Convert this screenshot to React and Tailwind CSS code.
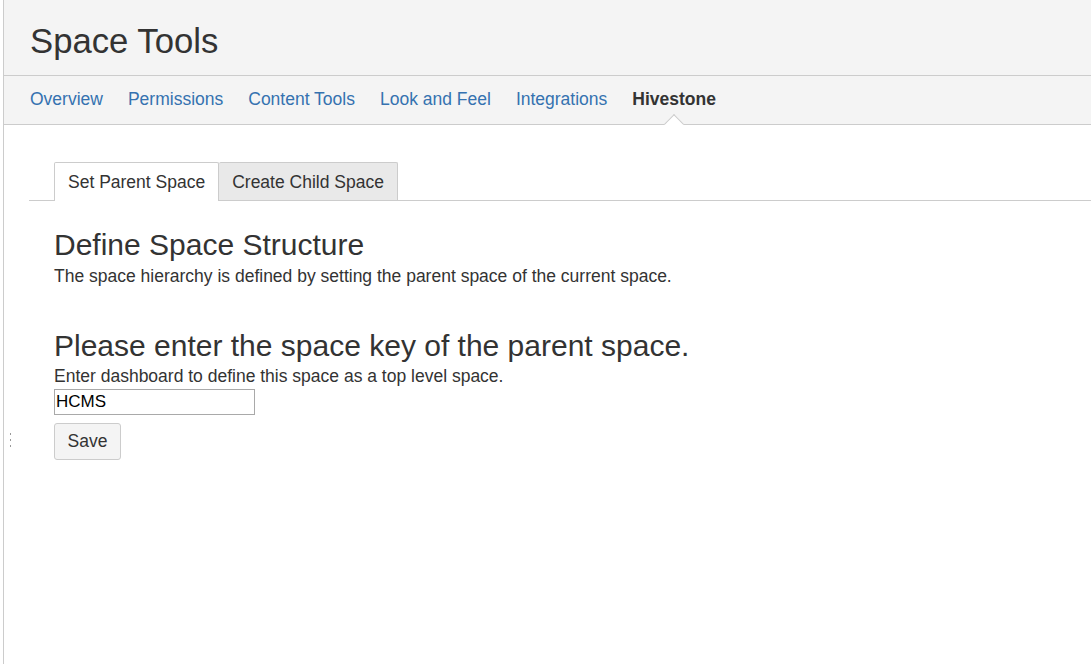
import React from "react";

const navItems = ["Overview", "Permissions", "Content Tools", "Look and Feel", "Integrations"];

const App = () => {
  return (
    <div
      className="relative min-h-[664px] bg-white pl-[3px] text-[#333]"
      style={{ fontFamily: '"Liberation Sans", Arial, sans-serif' }}>
      <div className="min-h-[664px] border-l border-[#cccccc]">
        {/* page header */}
        <div className="h-[76px] bg-[#f4f4f4] border-b border-[#cccccc] pl-[26px] pt-[21px]">
          <h1 className="text-[34.7px] leading-[40px] text-[#333]">Space Tools</h1>
        </div>

        {/* space tools nav */}
        <div className="h-[49px] bg-[#f4f4f4] border-b border-[#cccccc] pl-[26px] flex gap-[25px]">
          {navItems.map((item) => (
            <a key={item} href="#" className="flex items-center h-full pb-[1px] text-[17.5px] text-[#3572b0]">
              {item}
            </a>
          ))}
          <span className="relative flex items-center h-full pb-[1px] text-[17.5px] font-bold text-[#333]">
            Hivestone
            <span className="absolute left-1/2 bottom-[-7px] w-[14px] h-[14px] -translate-x-1/2 rotate-45 bg-white border-t border-l border-[#cccccc]" />
          </span>
        </div>

        <div className="pl-[25px] pt-[37px]">
          {/* tabs */}
          <div className="flex border-b border-[#cccccc] pl-[25px]">
            <div className="-mb-px h-[39px] px-[13px] flex items-center bg-white border border-b-0 border-[#cccccc] rounded-t-[2px] text-[17.5px]">
              Set Parent Space
            </div>
            <div className="h-[38px] px-[13px] pt-[1px] flex items-center bg-[#e9e9e9] border border-b-0 border-l-0 border-[#cccccc] rounded-t-[2px] text-[17.5px]">
              Create Child Space
            </div>
          </div>

          <div className="pl-[25px]">
            <h2 className="mt-[27px] text-[30px] leading-[34px]">Define Space Structure</h2>
            <p className="mt-[4px] text-[17.5px] leading-[20px]">
              The space hierarchy is defined by setting the parent space of the current space.
            </p>

            <h2 className="mt-[43px] text-[30px] leading-[34px]">Please enter the space key of the parent space.</h2>
            <p className="mt-[3px] text-[17.5px] leading-[20px]">
              Enter dashboard to define this space as a top level space.
            </p>
            <input
              type="text"
              defaultValue="HCMS"
              className="mt-[3px] block w-[201px] h-[26px] px-[1px] border border-[#a9a9a9] text-[17px] text-black outline-none"
            />
            <button className="mt-[8px] block w-[67px] h-[37px] bg-[#f4f4f4] border border-[#cccccc] rounded-[3px] text-[17.5px] text-[#333]">
              Save
            </button>
          </div>
        </div>
      </div>

      {/* resize handle dots */}
      <div className="absolute left-[10px] top-[433px] flex flex-col gap-[4px]">
        <span className="block w-[1px] h-[2px] bg-[#999]" />
        <span className="block w-[1px] h-[2px] bg-[#999]" />
        <span className="block w-[1px] h-[2px] bg-[#999]" />
      </div>
    </div>
  );
};

export default App;
